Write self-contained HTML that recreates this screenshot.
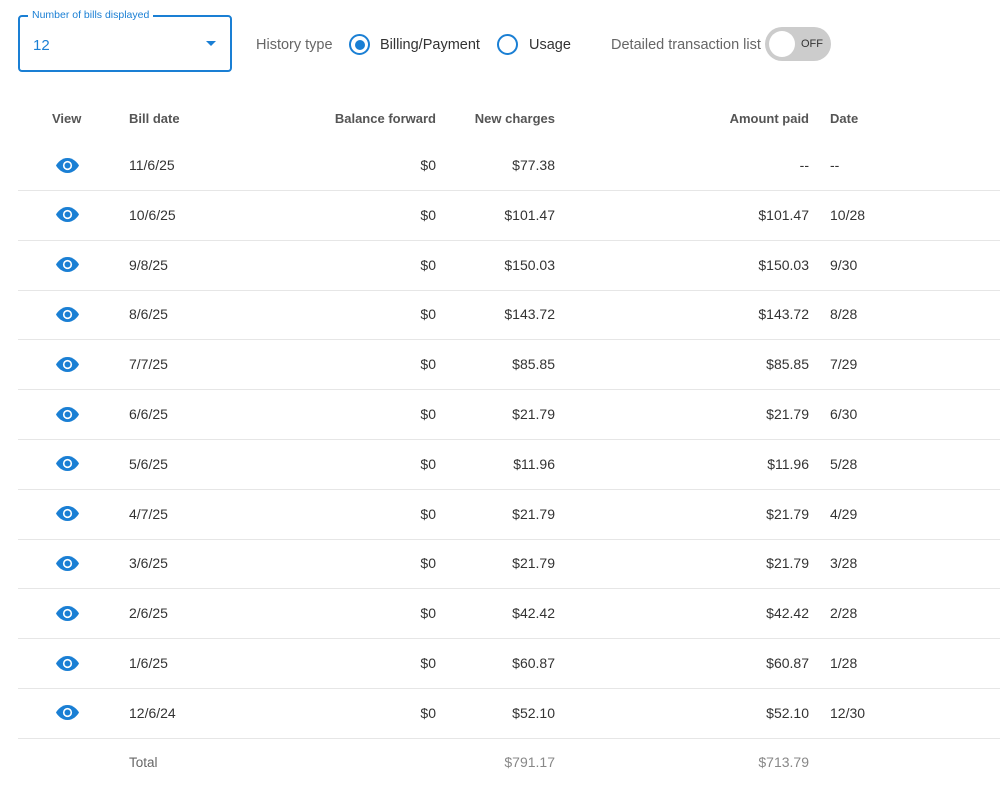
<!DOCTYPE html>
<html><head><meta charset="utf-8"><style>
*{margin:0;padding:0;box-sizing:border-box}
body{width:1000px;height:802px;background:#fff;font-family:"Liberation Sans",sans-serif;color:#333;position:relative;overflow:hidden}
.a{position:absolute;white-space:nowrap}
.sel{position:absolute;left:18px;top:15px;width:214px;height:57px;border:2px solid #1a7fd4;border-radius:4px}
.lbl{position:absolute;left:28px;top:9px;background:#fff;padding:0 4px;font-size:10.5px;color:#1a7fd4}
.h{font-size:13px;font-weight:bold;color:#555;top:111px}
.r{font-size:14px;color:#333}
.line{position:absolute;left:18px;width:982px;height:1px;background:#e6e6e6}
.eye{position:absolute;left:56px;width:23px;height:15px}
</style></head><body>
<div class="sel"></div>
<div class="lbl a">Number of bills displayed</div>
<div class="a" style="left:33px;top:37px;font-size:15px;color:#1a7fd4">12</div>
<div class="a" style="left:206px;top:41px;width:0;height:0;border-left:5px solid transparent;border-right:5px solid transparent;border-top:5px solid #1a7fd4"></div>
<div class="a" style="left:256px;top:37px;font-size:14.5px;color:#666">History type</div>
<div class="a" style="left:349px;top:34px;width:21px;height:21px;border:2px solid #1a7fd4;border-radius:50%"></div>
<div class="a" style="left:354.5px;top:39.5px;width:10px;height:10px;background:#1a7fd4;border-radius:50%"></div>
<div class="a" style="left:380px;top:37px;font-size:14.5px;color:#333">Billing/Payment</div>
<div class="a" style="left:497px;top:34px;width:21px;height:21px;border:2px solid #1a7fd4;border-radius:50%"></div>
<div class="a" style="left:529px;top:37px;font-size:14.5px;color:#333">Usage</div>
<div class="a" style="left:611px;top:37px;font-size:14.5px;color:#666">Detailed transaction list</div>
<div class="a" style="left:765px;top:27px;width:66px;height:34px;background:#ccc;border-radius:17px"></div>
<div class="a" style="left:769px;top:31px;width:26px;height:26px;background:#fff;border-radius:50%"></div>
<div class="a" style="left:801px;top:38px;font-size:11px;color:#333">OFF</div>

<div class="a h" style="left:52px">View</div>
<div class="a h" style="left:129px">Bill date</div>
<div class="a h" style="right:564px">Balance forward</div>
<div class="a h" style="right:445px">New charges</div>
<div class="a h" style="right:191px">Amount paid</div>
<div class="a h" style="left:830px">Date</div>
<div id="rows"></div>
<script>
var d=[["11/6/25","$77.38","--","--"],["10/6/25","$101.47","$101.47","10/28"],["9/8/25","$150.03","$150.03","9/30"],["8/6/25","$143.72","$143.72","8/28"],["7/7/25","$85.85","$85.85","7/29"],["6/6/25","$21.79","$21.79","6/30"],["5/6/25","$11.96","$11.96","5/28"],["4/7/25","$21.79","$21.79","4/29"],["3/6/25","$21.79","$21.79","3/28"],["2/6/25","$42.42","$42.42","2/28"],["1/6/25","$60.87","$60.87","1/28"],["12/6/24","$52.10","$52.10","12/30"]];
var h="";
d.forEach(function(r,i){var y=165+i*49.8;var t=y-8;
h+='<svg class="eye" style="top:'+(y-7.5)+'px" viewBox="0 0 23 15"><path d="M11.5 0C6 0 2 4 0 7.5 2 11 6 15 11.5 15S21 11 23 7.5C21 4 17 0 11.5 0z" fill="#1a7fd4"/><circle cx="11.5" cy="7.5" r="4.6" fill="#fff"/><circle cx="11.5" cy="7.5" r="3" fill="#1a7fd4"/></svg>';
h+='<div class="a r" style="left:129px;top:'+t+'px">'+r[0]+'</div>';
h+='<div class="a r" style="right:564px;top:'+t+'px">$0</div>';
h+='<div class="a r" style="right:445px;top:'+t+'px">'+r[1]+'</div>';
h+='<div class="a r" style="right:191px;top:'+t+'px">'+r[2]+'</div>';
h+='<div class="a r" style="left:830px;top:'+t+'px">'+r[3]+'</div>';
h+='<div class="line" style="top:'+(y+25)+'px"></div>';});
h+='<div class="a" style="left:129px;top:755px;font-size:13.5px;color:#666">Total</div>';
h+='<div class="a" style="right:445px;top:754px;font-size:14px;color:#888">$791.17</div>';
h+='<div class="a" style="right:191px;top:754px;font-size:14px;color:#888">$713.79</div>';
document.getElementById("rows").innerHTML=h;
</script>
</body></html>
